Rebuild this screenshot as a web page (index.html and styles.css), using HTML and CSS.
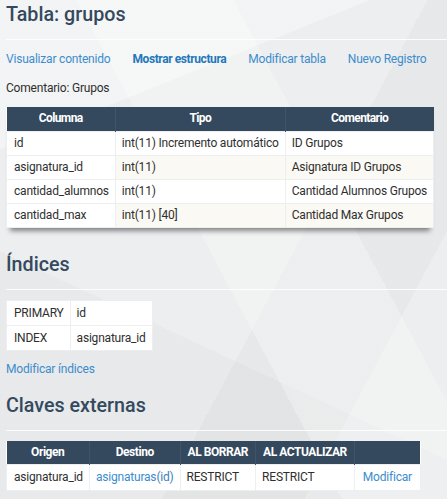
FILE: index.html
```html
<!DOCTYPE html>
<html lang="es">
<head>
<meta charset="utf-8">
<title>Tabla: grupos</title>
<link rel="stylesheet" href="styles.css">
</head>
<body>
<div class="page">
  <h2 class="heading">Tabla: grupos</h2>
  <p class="links">
    <a href="#">Visualizar contenido</a>
    <a href="#" class="active">Mostrar estructura</a>
    <a href="#">Modificar tabla</a>
    <a href="#">Nuevo Registro</a>
  </p>
  <p class="comment">Comentario: Grupos</p>
  <table class="grid structure">
    <thead>
      <tr><th>Columna</th><th>Tipo</th><th>Comentario</th></tr>
    </thead>
    <tbody>
      <tr><th>id</th><td>int(11) Incremento automático</td><td>ID Grupos</td></tr>
      <tr class="odd"><th>asignatura_id</th><td>int(11)</td><td>Asignatura ID Grupos</td></tr>
      <tr><th>cantidad_alumnos</th><td>int(11)</td><td>Cantidad Alumnos Grupos</td></tr>
      <tr class="odd"><th>cantidad_max</th><td>int(11) [40]</td><td>Cantidad Max Grupos</td></tr>
    </tbody>
  </table>

  <h3 class="heading section">Índices</h3>
  <table class="grid indexes">
    <tbody>
      <tr><th>PRIMARY</th><td>id</td></tr>
      <tr><th>INDEX</th><td>asignatura_id</td></tr>
    </tbody>
  </table>
  <p class="after"><a href="#">Modificar índices</a></p>

  <h3 class="heading section fk-heading">Claves externas</h3>
  <table class="grid fk">
    <thead>
      <tr><th>Origen</th><th>Destino</th><th>AL BORRAR</th><th>AL ACTUALIZAR</th><th class="blank"></th></tr>
    </thead>
    <tbody>
      <tr><th>asignatura_id</th><td><a href="#">asignaturas</a><span class="target">(id)</span></td><td>RESTRICT</td><td>RESTRICT</td><td class="action"><a href="#">Modificar</a></td></tr>
    </tbody>
  </table>
</div>
</body>
</html>
```

FILE: styles.css
```css
html, body {
  margin: 0;
  padding: 0;
}

body {
  font-family: Roboto, "Liberation Sans", sans-serif;
  font-size: 12px;
  letter-spacing: -0.2px;
  color: #2f2f2f;
  background-color: #eceeef;
  background-image:
    linear-gradient(158deg, rgba(255,255,255,0.35) 0 22%, transparent 22%),
    linear-gradient(62deg, transparent 0 48%, rgba(255,255,255,0.28) 48% 70%, transparent 70%),
    linear-gradient(118deg, transparent 0 60%, rgba(0,0,0,0.025) 60% 80%, transparent 80%),
    linear-gradient(25deg, rgba(0,0,0,0.02) 0 35%, transparent 35%);
  min-height: 499px;
}

.page {
  padding: 2px 0 0 6px;
}

a {
  color: #3d8ccd;
  text-decoration: none;
}

.heading {
  margin: 0;
  font-size: 19.7px;
  letter-spacing: 0;
  line-height: 26px;
  font-weight: 500;
  color: #34495e;
  padding-bottom: 11px;
  border-bottom: 1px solid rgba(255, 255, 255, 0.85);
}

.section {
  margin-top: 24px;
}

.fk-heading {
  margin-top: 16px;
}

.links {
  margin: 11px 0 0;
  line-height: 16px;
  display: flex;
  gap: 22px;
  white-space: nowrap;
}

.links a {
  flex-shrink: 0;
}

.links .active {
  font-weight: bold;
  color: #2477ba;
  letter-spacing: -0.4px;
}

.comment {
  margin: 13px 0 0;
  line-height: 16px;
}

.grid {
  border-collapse: collapse;
  background: #fff;
  margin-top: 11px;
}

.grid th,
.grid td {
  padding: 4px 6px;
  line-height: 15px;
  border: 1px solid #eceeef;
  text-align: left;
  font-weight: normal;
  white-space: nowrap;
  vertical-align: middle;
}

.grid tbody th {
  padding-left: 7px;
}

.grid thead th {
  background: #34495e;
  color: #fff;
  font-weight: bold;
  text-align: center;
  letter-spacing: -0.6px;
  border: 0;
  border-left: 1px solid #3f5469;
  padding-top: 4px;
  padding-bottom: 5px;
}

.grid thead th:first-child {
  border-left: 0;
}

.grid tbody th {
  background: #fff;
}

.grid tbody tr.odd td {
  background: #fbf9f3;
}

.structure {
  box-shadow: 0 7px 5px -4px rgba(0, 0, 0, 0.45);
}

.indexes {
  margin-top: 10px;
}

.indexes th,
.indexes td {
  padding-top: 5px;
  padding-bottom: 4px;
}

.after {
  margin: 10px 0 0;
  line-height: 16px;
}

.fk {
  margin-top: 10px;
}

.fk thead th {
  padding: 4px 7px;
  letter-spacing: -0.45px;
}

.fk tbody th,
.fk tbody td {
  padding-top: 5px;
  padding-bottom: 5px;
}

.fk .action {
  padding-left: 8px;
  padding-right: 8px;
}

.fk .blank {
  min-width: 48px;
}

.fk .target {
  color: #3d7fc0;
}
```
